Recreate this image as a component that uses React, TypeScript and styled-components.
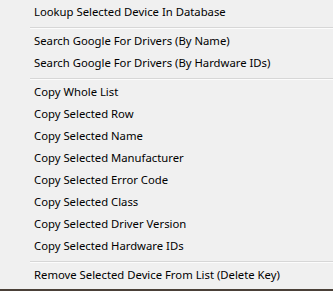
import React from "react";
import styled, { createGlobalStyle } from "styled-components";

const Global = createGlobalStyle`
  html, body { margin: 0; padding: 0; background: #f0f0f0; }
  body { width: 333px; height: 291px; overflow: hidden; }
`;

const Menu = styled.div`
  width: 333px;
  height: 291px;
  box-sizing: border-box;
  background: #f0f0f0;
  padding-top: 2px;
  display: flex;
  flex-direction: column;
  font-family: "Noto Sans", "Open Sans", sans-serif;
  font-size: 11.3px;
  color: #000;
  border-bottom: 2px solid #4a4038;
`;

const Item = styled.div`
  height: 22px;
  box-sizing: border-box;
  line-height: 20px;
  padding: 0 0 2px 34px;
  white-space: nowrap;
  flex: none;
`;

const Separator = styled.div`
  height: 7px;
  flex: none;
  display: flex;
  align-items: center;
  padding-left: 30px;
  &::after {
    content: "";
    flex: 1;
    height: 1px;
    background: #d7d7d7;
    border-bottom: 1px solid #fcfcfc;
  }
`;

type Entry = string | null;

const entries: Entry[] = [
  "Lookup Selected Device In Database",
  null,
  "Search Google For Drivers (By Name)",
  "Search Google For Drivers (By Hardware IDs)",
  null,
  "Copy Whole List",
  "Copy Selected Row",
  "Copy Selected Name",
  "Copy Selected Manufacturer",
  "Copy Selected Error Code",
  "Copy Selected Class",
  "Copy Selected Driver Version",
  "Copy Selected Hardware IDs",
  null,
  "Remove Selected Device From List (Delete Key)",
];

export default function App() {
  return (
    <>
      <Global />
      <Menu>
        {entries.map((e, i) =>
          e === null ? <Separator key={i} /> : <Item key={i}>{e}</Item>
        )}
      </Menu>
    </>
  );
}
